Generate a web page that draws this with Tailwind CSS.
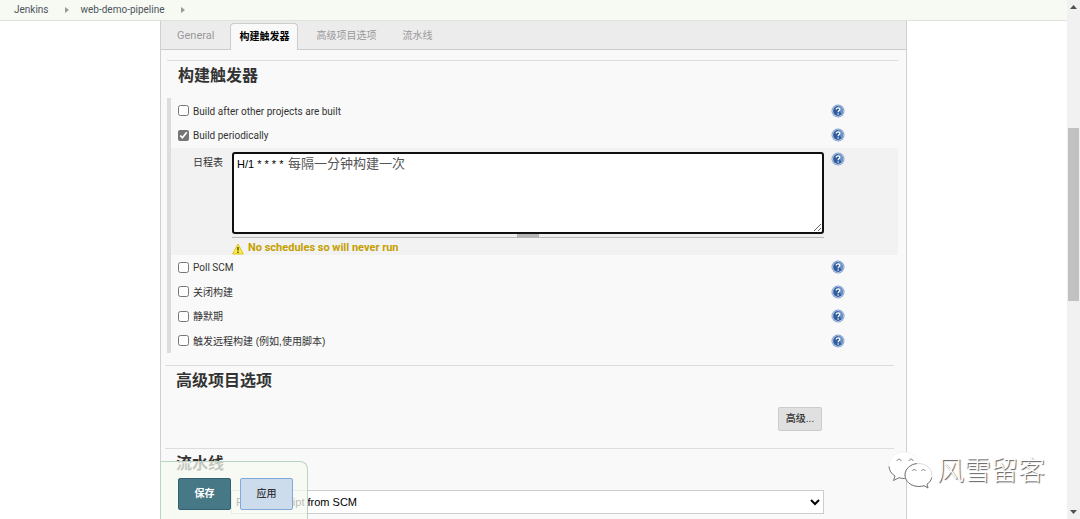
<!DOCTYPE html>
<html lang="zh-CN">
<head>
<meta charset="utf-8">
<title>web-demo-pipeline Config [Jenkins]</title>
<script src="https://cdn.jsdelivr.net/npm/@tailwindcss/browser@4"></script>
</head>
<body class="flex h-screen overflow-hidden bg-white font-['Roboto','Noto_Sans_CJK_SC',sans-serif] text-[10px] leading-4 text-[#333]">
<svg class="hidden" aria-hidden="true">
  <symbol id="help" viewBox="0 0 14 14">
    <circle cx="7" cy="7" r="6.5" fill="#7f9fcb"/>
    <circle cx="7" cy="7" r="5.6" fill="#d3deee"/>
    <circle cx="7" cy="7" r="4.9" fill="#2f5d9f"/>
    <path d="M7 2.1a4.9 4.9 0 0 1 3.4 8.4C9.600 8 8 7 7 2.100z" fill="#6d93c8"/>
    <path d="M5.200 5.500C5.200 3.400 8.900 3.500 8.800 5.400 8.700 6.700 7.100 6.700 7.100 8.200" fill="none" stroke="#fff" stroke-width="1.300"/>
    <circle cx="7.100" cy="10" r=".8" fill="#fff"/>
  </symbol>
</svg>

<div class="relative flex min-w-0 flex-1 flex-col overflow-hidden">
  <nav aria-label="breadcrumb" class="flex h-[21px] shrink-0 items-center border-b border-[#dfe3da] bg-[#f6faf2] pl-3.5 text-[#4d545d]">
    <a href="#">Jenkins</a>
    <svg class="mr-3 ml-4 h-2 w-1" viewBox="0 0 4 8"><path d="M0 1 4 4 0 7z" fill="#999"/></svg>
    <a href="#">web-demo-pipeline</a>
    <svg class="ml-4 h-2 w-1" viewBox="0 0 4 8"><path d="M0 1 4 4 0 7z" fill="#999"/></svg>
  </nav>

  <main class="mx-40 flex-1 border-x border-[#d0d0d0] bg-[#f9f9f9]">
    <div class="flex h-[29px] items-end border-b border-[#ccc] bg-[#ececec] text-[#999]">
      <button class="h-[27px] px-4 text-[11px]">General</button>
      <button class="-mb-px h-[27px] rounded-t border border-b-0 border-[#ccc] bg-[#f9f9f9] px-2 font-bold text-black">构建触发器</button>
      <button class="h-[27px] px-[18px]">高级项目选项</button>
      <button class="h-[27px] px-2">流水线</button>
    </div>

    <form class="pr-2 font-['Liberation_Sans','Noto_Sans_CJK_SC',sans-serif]">
      <section class="mt-2.5 ml-1.5 border-t border-[#ddd]">
        <h2 class="h-[37px] pt-[3px] pl-[11px] text-[16px] leading-6 font-bold">构建触发器</h2>
        <div class="border-l-4 border-[#ddd]">
          <div class="flex h-[25px] items-center pl-[7px]">
            <input id="t1" type="checkbox" class="mr-1 size-[11px] accent-[#757575]"><label for="t1" class="flex-1 pt-0.5 font-['Roboto',sans-serif]">Build after other projects are built</label>
            <button type="button" aria-label="Help" class="mr-[53px]"><svg class="size-3.5"><use href="#help"/></svg></button>
          </div>
          <div class="flex h-[25px] items-center pb-px pl-[7px]">
            <input id="t2" type="checkbox" checked class="mr-1 size-[11px] accent-[#757575]"><label for="t2" class="flex-1 pt-0.5 font-['Roboto',sans-serif]">Build periodically</label>
            <button type="button" aria-label="Help" class="mr-[53px]"><svg class="size-3.5"><use href="#help"/></svg></button>
          </div>
          <div class="flex h-[107px] bg-[#f2f2f2] pt-1">
            <label for="spec" class="w-[61px] pt-[3px] pl-[22px]">日程表</label>
            <div class="relative flex-1">
              <textarea id="spec" class="block h-[82px] w-full resize rounded-[3px] border-2 border-[#101010] bg-white px-[3px] py-0.5 text-[11px] leading-4 text-black outline-none">H/1 * * * *</textarea>
              <span class="pointer-events-none absolute top-0.5 left-14 text-[13px] leading-5 text-[#555]">每隔一分钟构建一次</span>
              <div class="flex h-1 justify-center border-b border-[#bbb] bg-[#eee]"><span class="h-1 w-[22px] bg-[#b5b5b5]"></span></div>
              <div class="flex items-center pt-0.5 text-[#c4a000]">
                <svg class="mt-0.5 mr-1 h-3 w-3" viewBox="0 0 12 12"><path d="M6 1 11.300 11H.7z" fill="#fce94f" stroke="#dfc51a" stroke-linejoin="round"/><path d="M6 4v3.500M6 8.500V10" stroke="#5f5500" stroke-width="1.500"/></svg>
                <strong class="font-['Roboto',sans-serif] text-[11px]">No schedules so will never run</strong>
              </div>
            </div>
            <div class="w-[74px] pl-[7px]"><button type="button" aria-label="Help"><svg class="size-3.5"><use href="#help"/></svg></button></div>
          </div>
          <div class="flex h-[25px] items-center pb-px pl-[7px]">
            <input id="t3" type="checkbox" class="mr-1 size-[11px]"><label for="t3" class="flex-1 pt-0.5 font-['Roboto',sans-serif]">Poll SCM</label>
            <button type="button" aria-label="Help" class="mr-[53px]"><svg class="size-3.5"><use href="#help"/></svg></button>
          </div>
          <div class="flex h-6 items-center pb-px pl-[7px]">
            <input id="t4" type="checkbox" class="mr-1 size-[11px]"><label for="t4" class="flex-1 pt-0.5">关闭构建</label>
            <button type="button" aria-label="Help" class="mr-[53px]"><svg class="size-3.5"><use href="#help"/></svg></button>
          </div>
          <div class="flex h-[25px] items-center pb-px pl-[7px]">
            <input id="t5" type="checkbox" class="mr-1 size-[11px]"><label for="t5" class="flex-1 pt-0.5">静默期</label>
            <button type="button" aria-label="Help" class="mr-[53px]"><svg class="size-3.5"><use href="#help"/></svg></button>
          </div>
          <div class="flex h-6 items-center pb-px pl-[7px]">
            <input id="t6" type="checkbox" class="mr-1 size-[11px]"><label for="t6" class="flex-1 pt-0.5">触发远程构建 (例如,使用脚本)</label>
            <button type="button" aria-label="Help" class="mr-[53px]"><svg class="size-3.5"><use href="#help"/></svg></button>
          </div>
        </div>
      </section>

      <section class="mt-3 mr-1 ml-1 border-t border-[#ddd]">
        <h2 class="pt-[3px] pl-[11px] text-[16px] leading-6 font-bold">高级项目选项</h2>
        <div class="mt-3.5 mr-[72px] flex justify-end">
          <button type="button" class="h-6 w-11 rounded-xs border border-[#ccc] bg-[#e0e0e0] font-medium">高级...</button>
        </div>
      </section>

      <section class="mt-[17px] mr-1 ml-1 border-t border-[#ddd]">
        <h2 class="pt-[3px] pl-[11px] text-[16px] leading-6 font-bold">流水线</h2>
        <div class="mt-3.5 mr-[70px] ml-[66px]">
          <select aria-label="Definition" class="block h-6 w-full border border-[#ccc] bg-white text-[11px] text-black"><option>Pipeline script from SCM</option></select>
        </div>
      </section>
    </form>
  </main>

  <div class="absolute bottom-0 left-40 flex h-[58px] w-[148px] gap-[9px] rounded-tr-lg border border-b-0 border-[#bcd3c2] bg-[#f5f9ef]/75 pt-4 pl-[17px]">
    <button class="h-8 w-[53px] rounded-xs border border-[#33606f] bg-[#467886] font-bold text-white">保存</button>
    <button class="h-8 w-[53px] rounded-xs border border-[#7fa9dc] bg-[#cddced] font-medium text-[#333]">应用</button>
  </div>
</div>

<div class="flex w-[13px] shrink-0 flex-col items-center bg-[#f1f1f1]" aria-hidden="true">
  <svg class="mt-1 h-[5px] w-[7px]" viewBox="0 0 7 5"><path d="M0 5 3.500 1 7 5z" fill="#505050"/></svg>
  <div class="mt-[119px] h-[173px] w-[11px] bg-[#c1c1c1]"></div>
  <svg class="mt-auto mb-1 h-[5px] w-[7px]" viewBox="0 0 7 5"><path d="M0 0 3.500 4 7 0z" fill="#505050"/></svg>
</div>

<div class="pointer-events-none absolute right-[35px] bottom-7 flex items-start gap-1">
  <svg class="h-[40px] w-[45px]" viewBox="0 0 45 40">
    <g fill="#fff" stroke-linejoin="round">
      <path d="M16 1C7 1 1 7 1 14.500c0 4.500 2.200 8 6 10.500l-1.500 4.500 5.500-2.800c3 .9 6 1 9 .3C30 25 32 19 31 12 29.500 5 23 1 16 1z" stroke="#eee" stroke-width=".7"/>
      <path d="M1 15.500c.3 4 2.300 7.300 6 9.500l-1.500 4.500 5.500-2.800c2.500.8 5 1 7 .7" fill="none" stroke="#777"/>
      <path d="M30.500 12.500C22.500 12.500 17 18 17 24 17 30.500 23 35.500 31 35.500c2 0 3.500-.3 5-.8l4 2.300-1-3.800c3.300-2.300 5-5.200 5-8.700 0-6.500-5.500-12-13.500-12z" stroke="#ccc" stroke-width=".7"/>
      <path d="M29 12.600C22.500 13 17 18 17 24 17 30.500 23 35.500 31 35.500c2 0 3.500-.3 5-.8l4 2.300-1-3.800c2.500-1.700 4.200-4 4.700-6.500" fill="none" stroke="#777"/>
      <path d="M9 10c.7-2.500 3.500-2.500 4.200 0M21 10c.7-2.500 3.500-2.500 4.200 0M24.500 20c.6-2 3-2 3.600 0M33.500 20c.6-2 3-2 3.600 0" fill="none" stroke="#777"/>
    </g>
  </svg>
  <span class="font-['Noto_Sans_CJK_SC',sans-serif] text-[27px] leading-9 font-light text-white [text-shadow:1px_1px_1px_#555]">风雪留客</span>
</div>
</body>
</html>
